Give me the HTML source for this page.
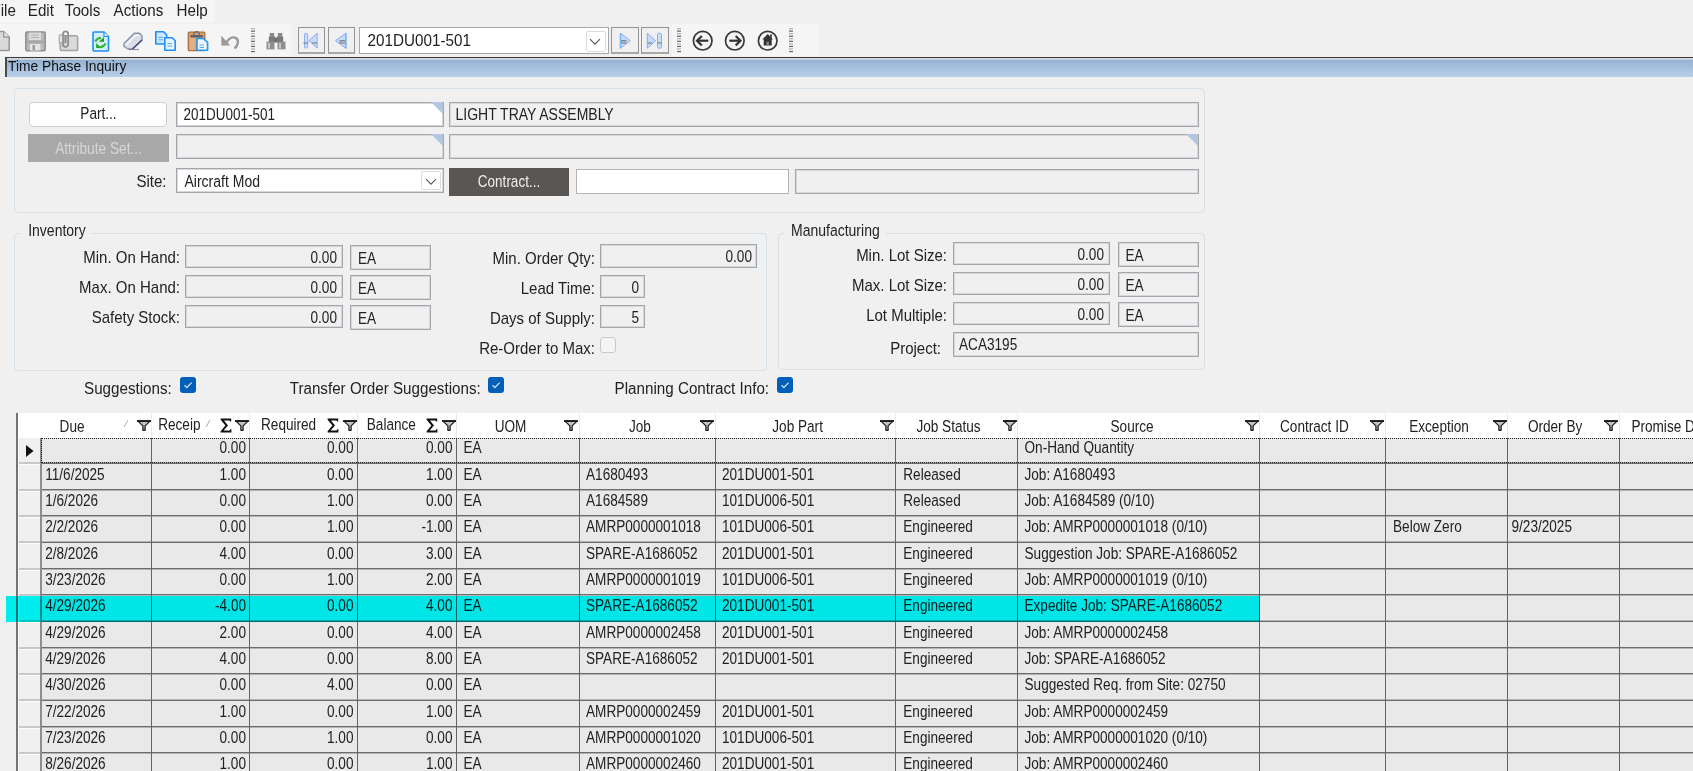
<!DOCTYPE html><html><head><meta charset="utf-8"><title>Time Phase Inquiry</title><style>
html,body{margin:0;padding:0;}
body{width:1693px;height:771px;overflow:hidden;background:#f0f0f0;position:relative;font-family:"Liberation Sans", sans-serif;color:#222;}
div,svg{position:absolute;box-sizing:border-box;}
.t{white-space:pre;line-height:1;}
</style></head><body>
<div style="left:0px;top:0px;width:215px;height:23px;background:#f5f5f5"></div>
<div class="t" style="left:-8.6px;top:3px;font-size:15.2px;transform:scaleY(1.1);transform-origin:0 85%;">File</div>
<div class="t" style="left:27.8px;top:3px;font-size:15.2px;transform:scaleY(1.1);transform-origin:0 85%;">Edit</div>
<div class="t" style="left:64.8px;top:3px;font-size:15.2px;transform:scaleY(1.1);transform-origin:0 85%;">Tools</div>
<div class="t" style="left:113.5px;top:3px;font-size:15.2px;transform:scaleY(1.1);transform-origin:0 85%;">Actions</div>
<div class="t" style="left:176.5px;top:3px;font-size:15.2px;transform:scaleY(1.1);transform-origin:0 85%;">Help</div>
<div style="left:0px;top:24px;width:292px;height:32px;background:#f5f5f5"></div>
<div style="left:672px;top:24px;width:147px;height:32px;background:#f5f5f5"></div>
<svg style="left:-10px;top:30px" width="22" height="22" viewBox="0 0 22 22"><path d="M0.8 1.5 H13.7 L19.2 7 V19.8 Q19.2 20.5 18.5 20.5 H0.8 Z" fill="#d9d9d9" stroke="#9a9a9a" stroke-width="1.6"/><path d="M13.7 1.5 V7 H19.2" fill="#ececec" stroke="#9a9a9a" stroke-width="1.4"/></svg>
<svg style="left:25px;top:31px" width="21" height="21" viewBox="0 0 21 21"><rect x="0.8" y="1" width="19.4" height="18.8" rx="1.2" fill="#b8b8b8" stroke="#8e8e8e" stroke-width="1.5"/><rect x="4" y="1.5" width="12" height="7.5" fill="#dcdcdc"/><line x1="6" y1="4" x2="14" y2="4" stroke="#b0b0b0"/><line x1="6" y1="6.5" x2="14" y2="6.5" stroke="#b0b0b0"/><rect x="1.5" y="9.5" width="18" height="3" fill="#a8a8a8"/><rect x="5" y="13" width="10.5" height="6.5" fill="#e4e4e4"/><rect x="7.5" y="14" width="2.5" height="5" fill="#9a9a9a"/></svg>
<svg style="left:58px;top:30px" width="21" height="22" viewBox="0 0 21 22"><rect x="2.3" y="5.7" width="17.3" height="14.8" rx="1.8" fill="#dadada" stroke="#a2a2a2" stroke-width="1.6"/><rect x="1.3" y="5" width="5" height="8" fill="#e6e6e6" stroke="#a8a8a8" stroke-width="1.2"/><path d="M5 16 V4 Q5 1.3 7.6 1.3 Q10.2 1.3 10.2 4 V14 Q10.2 16.8 7.6 16.8 Q5 16.8 5 14" fill="none" stroke="#8c8c8c" stroke-width="1.7"/><path d="M7.8 5 V13" stroke="#8c8c8c" stroke-width="1.5"/></svg>
<svg style="left:92px;top:31px" width="18" height="21" viewBox="0 0 18 21"><path d="M1 2 Q1 1 2 1 H12 L16.5 5.5 V19 Q16.5 20 15.5 20 H2 Q1 20 1 19 Z" fill="#d4eefc" stroke="#1e8ff5" stroke-width="1.6"/><path d="M12 1 V5.5 H16.5" fill="#eef8ff" stroke="#1e8ff5" stroke-width="1.2"/><path d="M3.2 10.6 Q5.2 7 9 6.8" fill="none" stroke="#35b535" stroke-width="2.1"/><path d="M6.8 10.8 L12 6 V10.8 Z" fill="#18a818"/><path d="M4.2 12 V17 H9.2 Z" fill="#18a818"/><path d="M8 16.4 Q11.8 16 13.6 12.4" fill="none" stroke="#35b535" stroke-width="2.1"/></svg>
<svg style="left:122px;top:32px" width="22" height="19" viewBox="0 0 22 19"><path d="M12.3 1.2 H17.5 L20 4 V8 L10.5 17 H6 L2 14.5 V11.5 Z" fill="#d8dde8" stroke="#8894a8" stroke-width="1.4" stroke-linejoin="round"/><path d="M4 13 L13.5 3.5 H17.5" fill="none" stroke="#ffffff" stroke-width="1.2"/><path d="M10.5 17 L20 8" stroke="#4a4a78" stroke-width="1.6"/><path d="M7 17.5 H17" stroke="#6a6a90" stroke-width="1.2" opacity="0.7"/></svg>
<svg style="left:154px;top:30px" width="23" height="22" viewBox="0 0 23 22"><path d="M1.8 1.8 H9.6 L12.6 4.8 V14 H1.8 Z" fill="#cfe8fb" stroke="#1e8ff5" stroke-width="1.6" stroke-linejoin="round"/><line x1="4.5" y1="7.4" x2="9" y2="7.4" stroke="#62a8e8" stroke-width="1"/><line x1="4.5" y1="9.8" x2="9" y2="9.8" stroke="#62a8e8" stroke-width="1"/><path d="M10.8 7.8 H18.2 L21.2 10.8 V20.3 H10.8 Z" fill="#e6f4fe" stroke="#1e8ff5" stroke-width="1.6" stroke-linejoin="round"/><line x1="13.5" y1="13.6" x2="18" y2="13.6" stroke="#62a8e8" stroke-width="1"/><line x1="13.5" y1="16.2" x2="18" y2="16.2" stroke="#62a8e8" stroke-width="1"/></svg>
<svg style="left:187px;top:30px" width="22" height="22" viewBox="0 0 22 22"><rect x="1.3" y="2.2" width="16.5" height="18.5" rx="1" fill="#d9a070" stroke="#b07038" stroke-width="1.3"/><rect x="2.5" y="7" width="6" height="13" fill="#e8b890" opacity="0.6"/><path d="M4.5 6.2 H14.8" stroke="#5a6270" stroke-width="2.4" stroke-linecap="round"/><path d="M6.8 5.5 Q6.8 1.6 9.6 1.6 Q12.4 1.6 12.4 5.5" fill="none" stroke="#6a707a" stroke-width="1.4"/><path d="M10 8.5 H16.3 L20.6 12.3 V20.3 H10 Z" fill="#eaf6ff" stroke="#2196f3" stroke-width="1.6" stroke-linejoin="round"/><line x1="12.5" y1="15" x2="17" y2="15" stroke="#62a8e8"/><line x1="12.5" y1="17.5" x2="17" y2="17.5" stroke="#62a8e8"/></svg>
<svg style="left:220px;top:33px" width="20" height="17" viewBox="0 0 20 17"><path d="M6 10 Q10 3.5 14.5 4.5 Q18.5 5.5 17.8 10 Q17.2 13.5 14.5 15.5" fill="none" stroke="#9a9a9a" stroke-width="2.4"/><path d="M1.3 2.5 V12.5 H10.2 Z" fill="#9a9a9a"/></svg>
<svg style="left:250.6px;top:28px" width="4" height="25" viewBox="0 0 4 25"><rect x="0" y="0.00" width="4" height="1.2" fill="#b0b0b0"/><rect x="0" y="2.55" width="4" height="1.2" fill="#666666"/><rect x="0" y="5.10" width="4" height="1.2" fill="#b0b0b0"/><rect x="0" y="7.65" width="4" height="1.2" fill="#666666"/><rect x="0" y="10.20" width="4" height="1.2" fill="#b0b0b0"/><rect x="0" y="12.75" width="4" height="1.2" fill="#666666"/><rect x="0" y="15.30" width="4" height="1.2" fill="#b0b0b0"/><rect x="0" y="17.85" width="4" height="1.2" fill="#666666"/><rect x="0" y="20.40" width="4" height="1.2" fill="#b0b0b0"/><rect x="0" y="22.95" width="4" height="1.2" fill="#666666"/></svg>
<svg style="left:677.4px;top:28px" width="4" height="25" viewBox="0 0 4 25"><rect x="0" y="0.00" width="4" height="1.2" fill="#b0b0b0"/><rect x="0" y="2.55" width="4" height="1.2" fill="#666666"/><rect x="0" y="5.10" width="4" height="1.2" fill="#b0b0b0"/><rect x="0" y="7.65" width="4" height="1.2" fill="#666666"/><rect x="0" y="10.20" width="4" height="1.2" fill="#b0b0b0"/><rect x="0" y="12.75" width="4" height="1.2" fill="#666666"/><rect x="0" y="15.30" width="4" height="1.2" fill="#b0b0b0"/><rect x="0" y="17.85" width="4" height="1.2" fill="#666666"/><rect x="0" y="20.40" width="4" height="1.2" fill="#b0b0b0"/><rect x="0" y="22.95" width="4" height="1.2" fill="#666666"/></svg>
<svg style="left:789px;top:28px" width="4" height="25" viewBox="0 0 4 25"><rect x="0" y="0.00" width="4" height="1.2" fill="#b0b0b0"/><rect x="0" y="2.55" width="4" height="1.2" fill="#666666"/><rect x="0" y="5.10" width="4" height="1.2" fill="#b0b0b0"/><rect x="0" y="7.65" width="4" height="1.2" fill="#666666"/><rect x="0" y="10.20" width="4" height="1.2" fill="#b0b0b0"/><rect x="0" y="12.75" width="4" height="1.2" fill="#666666"/><rect x="0" y="15.30" width="4" height="1.2" fill="#b0b0b0"/><rect x="0" y="17.85" width="4" height="1.2" fill="#666666"/><rect x="0" y="20.40" width="4" height="1.2" fill="#b0b0b0"/><rect x="0" y="22.95" width="4" height="1.2" fill="#666666"/></svg>
<svg style="left:266px;top:32px" width="20" height="18" viewBox="0 0 20 18"><rect x="3.7" y="1" width="4.5" height="4" fill="#8a8a8a"/><rect x="11.8" y="1" width="4.5" height="4" fill="#8a8a8a"/><rect x="2.8" y="4.6" width="6.2" height="5.6" fill="#7a7a7a"/><rect x="11" y="4.6" width="6.2" height="5.6" fill="#7a7a7a"/><rect x="8.5" y="5.5" width="3" height="5" fill="#6e6e6e"/><rect x="0.5" y="9.6" width="8" height="7.8" fill="#8f8f8f"/><rect x="11.5" y="9.6" width="8" height="7.8" fill="#8f8f8f"/><rect x="2" y="11" width="2" height="5.5" fill="#c8c8c8"/><rect x="13" y="11" width="2" height="5.5" fill="#c8c8c8"/></svg>
<div style="left:298px;top:27px;width:27px;height:27px;border:1px solid #939393;border-bottom:2px solid #a8a8a8;background:#f0f0f0"></div>
<div style="left:328px;top:27px;width:27px;height:27px;border:1px solid #939393;border-bottom:2px solid #a8a8a8;background:#f0f0f0"></div>
<div style="left:611px;top:27px;width:28px;height:27px;border:1px solid #939393;border-bottom:2px solid #a8a8a8;background:#f0f0f0"></div>
<div style="left:641px;top:27px;width:28px;height:27px;border:1px solid #939393;border-bottom:2px solid #a8a8a8;background:#f0f0f0"></div>
<div style="left:359px;top:27px;width:250px;height:27px;border:1px solid #a8a8ac;background:#fff"></div>
<div class="t" style="left:367.5px;top:33px;font-size:15.25px;transform:scaleY(1.03);transform-origin:0 85%;">201DU001-501</div>
<div style="left:586px;top:31px;width:20px;height:21px;border:1px solid #dcdcdc;border-radius:2px;background:#fff"></div>
<svg style="left:302px;top:32px" width="18" height="18" viewBox="0 0 18 18"><rect x="2.5" y="1.6" width="3.2" height="14.3" rx="0.6" fill="#c2e2fa" stroke="#90a8f8" stroke-width="0.9"/><path d="M6.8 8.7 L15.2 1.2 V16.2 Z" fill="#c6dcf6" stroke="#90a8f8" stroke-width="1" stroke-linejoin="round"/><line x1="1.5" y1="11" x2="5.8" y2="11" stroke="#707070" stroke-width="1"/><line x1="10" y1="11" x2="15" y2="11" stroke="#707070" stroke-width="1"/></svg>
<svg style="left:334px;top:32px" width="14" height="18" viewBox="0 0 14 18"><path d="M1.5 8.7 L11.8 1.2 V16.2 Z" fill="#c6dcf6" stroke="#90a8f8" stroke-width="1" stroke-linejoin="round"/><line x1="11.8" y1="1" x2="11.8" y2="16.5" stroke="#7ab8f0" stroke-width="1.6"/><line x1="5.5" y1="8.8" x2="11" y2="8.8" stroke="#707070" stroke-width="1.2"/><line x1="5" y1="11" x2="11" y2="11" stroke="#707070" stroke-width="1"/></svg>
<svg style="left:619px;top:32px" width="14" height="18" viewBox="0 0 14 18"><path d="M1.5 1.2 L11.2 8.7 L1.5 16.2 Z" fill="#c6dcf6" stroke="#90a8f8" stroke-width="1" stroke-linejoin="round"/><line x1="1.5" y1="1" x2="1.5" y2="16.5" stroke="#7ab8f0" stroke-width="1.6"/><line x1="2" y1="8.8" x2="7.5" y2="8.8" stroke="#707070" stroke-width="1.2"/><line x1="2" y1="11" x2="7.5" y2="11" stroke="#707070" stroke-width="1"/></svg>
<svg style="left:646px;top:32px" width="18" height="18" viewBox="0 0 18 18"><path d="M1.3 1.2 L9.5 8.7 L1.3 16.2 Z" fill="#c6dcf6" stroke="#90a8f8" stroke-width="1" stroke-linejoin="round"/><rect x="11.5" y="1.2" width="4" height="15" rx="1.5" fill="#c2e2fa" stroke="#90a8f8" stroke-width="1"/><line x1="1.5" y1="11" x2="5.8" y2="11" stroke="#707070" stroke-width="1"/><line x1="11.5" y1="11" x2="15.5" y2="11" stroke="#707070" stroke-width="1"/></svg>
<svg style="left:589px;top:38px" width="12" height="8" viewBox="0 0 12 8"><path d="M1 1.2 L6 6.2 L11 1.2" fill="none" stroke="#555" stroke-width="1.1"/></svg>
<svg style="left:692px;top:30px" width="22" height="22" viewBox="0 0 22 22"><circle cx="10.7" cy="10.7" r="9.3" fill="none" stroke="#3a3a3a" stroke-width="1.7"/><path d="M5 10.7 H16.3" stroke="#333" stroke-width="2.2"/><path d="M9.8 6 L5 10.7 L9.8 15.4" fill="none" stroke="#333" stroke-width="2.2"/></svg>
<svg style="left:724px;top:30px" width="22" height="22" viewBox="0 0 22 22"><circle cx="10.8" cy="10.7" r="9.3" fill="none" stroke="#3a3a3a" stroke-width="1.7"/><path d="M5.3 10.7 H16.5" stroke="#333" stroke-width="2.2"/><path d="M11.7 6 L16.5 10.7 L11.7 15.4" fill="none" stroke="#333" stroke-width="2.2"/></svg>
<svg style="left:757px;top:30px" width="22" height="22" viewBox="0 0 22 22"><circle cx="10.7" cy="10.7" r="9.3" fill="none" stroke="#3a3a3a" stroke-width="1.7"/><path d="M10.7 4 L16 9.5 H14.7 V15.5 H6.7 V9.5 H5.4 Z" fill="#333"/><rect x="13.2" y="4.3" width="1.6" height="3.5" fill="#333"/><rect x="9.5" y="11.8" width="2.4" height="3.7" fill="#888"/></svg>
<div style="left:5px;top:57px;width:1688px;height:20px;border-top:1px solid #3a3a3a;border-left:2px solid #4a4a4a;background:linear-gradient(#d3d8dd 0px,#d3d8dd 1.3px,#95b1d3 2.2px,#b9d0ea 19px)"></div>
<div class="t" style="left:8px;top:60px;font-size:13.8px;transform:scaleY(1.1);transform-origin:0 85%;color:#101010">Time Phase Inquiry</div>
<div style="left:14px;top:88px;width:1191px;height:125px;border:1px solid #d5e0e8;border-radius:4px"></div>
<div style="left:29px;top:102px;width:138px;height:25px;border:1px solid #cfcfcf;border-radius:4px;background:#fff"></div>
<div class="t" style="left:-201.5px;width:600px;text-align:center;top:108px;font-size:13.6px;transform:scaleY(1.22);transform-origin:0 85%;">Part...</div>
<div style="left:176px;top:102px;width:268px;height:25px;border:1px solid #a4a6ac;box-shadow:inset 1px 1px 0 #d6d8dc,inset -1px -1px 0 #d6d8dc;background:#fff"></div>
<div style="left:431px;top:102px;width:0;height:0;border-top:12px solid #b3c6e0;border-left:12px solid transparent"></div>
<div class="t" style="left:183.5px;top:108.5px;font-size:13.5px;transform:scaleY(1.22);transform-origin:0 85%;">201DU001-501</div>
<div style="left:449px;top:102px;width:750px;height:25px;border:1px solid #a4a6ac;box-shadow:inset 1px 1px 0 #d6d8dc,inset -1px -1px 0 #d6d8dc;background:#f0f0f0"></div>
<div class="t" style="left:455.5px;top:108px;font-size:14.0px;transform:scaleY(1.22);transform-origin:0 85%;">LIGHT TRAY ASSEMBLY</div>
<div style="left:28px;top:134px;width:141px;height:28px;background:#a8a8a8"></div>
<div class="t" style="left:-201.5px;width:600px;text-align:center;top:142.5px;font-size:13.7px;transform:scaleY(1.22);transform-origin:0 85%;color:#d6d6d6">Attribute Set...</div>
<div style="left:176px;top:134px;width:268px;height:25px;border:1px solid #a4a6ac;box-shadow:inset 1px 1px 0 #d6d8dc,inset -1px -1px 0 #d6d8dc;background:#f0f0f0"></div>
<div style="left:431px;top:134px;width:0;height:0;border-top:12px solid #b3c6e0;border-left:12px solid transparent"></div>
<div style="left:449px;top:134px;width:750px;height:25px;border:1px solid #a4a6ac;box-shadow:inset 1px 1px 0 #d6d8dc,inset -1px -1px 0 #d6d8dc;background:#f0f0f0"></div>
<div style="left:1186px;top:134px;width:0;height:0;border-top:12px solid #b3c6e0;border-left:12px solid transparent"></div>
<div class="t" style="right:1526.5px;top:174px;font-size:15px;transform:scaleY(1.12);transform-origin:0 85%;">Site:</div>
<div style="left:176px;top:168px;width:268px;height:25px;border:1px solid #a4a6ac;box-shadow:inset 1px 1px 0 #d6d8dc,inset -1px -1px 0 #d6d8dc;background:#fff"></div>
<div class="t" style="left:184.5px;top:174.5px;font-size:14px;transform:scaleY(1.22);transform-origin:0 85%;">Aircraft Mod</div>
<div style="left:421px;top:171px;width:20px;height:19px;border:1px solid #dcdcdc;border-radius:2px;background:#fff"></div>
<svg style="left:425px;top:178px" width="12" height="8" viewBox="0 0 12 8"><path d="M1 1.2 L6 6.2 L11 1.2" fill="none" stroke="#555" stroke-width="1.1"/></svg>
<div style="left:449px;top:168px;width:120px;height:28px;background:#595654"></div>
<div class="t" style="left:209px;width:600px;text-align:center;top:176px;font-size:13.5px;transform:scaleY(1.22);transform-origin:0 85%;color:#f0f0f0">Contract...</div>
<div style="left:576px;top:169px;width:213px;height:25px;border:1px solid #b4b4b4;background:#fff"></div>
<div style="left:795px;top:169px;width:404px;height:25px;border:1px solid #a4a6ac;box-shadow:inset 1px 1px 0 #d6d8dc,inset -1px -1px 0 #d6d8dc;background:#f0f0f0"></div>
<div style="left:14px;top:233px;width:753px;height:138px;border:1px solid #d5e0e8;border-radius:4px"></div>
<div style="left:21px;top:226px;width:70px;height:14px;background:#f0f0f0"></div>
<div class="t" style="left:28.2px;top:224px;font-size:14.0px;transform:scaleY(1.22);transform-origin:0 85%;">Inventory</div>
<div class="t" style="right:1513px;top:250px;font-size:15px;transform:scaleY(1.12);transform-origin:0 85%;">Min. On Hand:</div>
<div style="left:185px;top:245px;width:158px;height:23px;border:1px solid #a4a6ac;box-shadow:inset 1px 1px 0 #d6d8dc,inset -1px -1px 0 #d6d8dc;background:#f0f0f0"></div>
<div class="t" style="right:1356px;top:252px;font-size:13.6px;transform:scaleY(1.22);transform-origin:0 85%;">0.00</div>
<div style="left:350px;top:245px;width:81px;height:25px;border:1px solid #a4a6ac;box-shadow:inset 1px 1px 0 #d6d8dc,inset -1px -1px 0 #d6d8dc;background:#f0f0f0"></div>
<div class="t" style="left:358px;top:252.5px;font-size:13.6px;transform:scaleY(1.22);transform-origin:0 85%;">EA</div>
<div class="t" style="right:1513px;top:280px;font-size:15px;transform:scaleY(1.12);transform-origin:0 85%;">Max. On Hand:</div>
<div style="left:185px;top:275px;width:158px;height:23px;border:1px solid #a4a6ac;box-shadow:inset 1px 1px 0 #d6d8dc,inset -1px -1px 0 #d6d8dc;background:#f0f0f0"></div>
<div class="t" style="right:1356px;top:282px;font-size:13.6px;transform:scaleY(1.22);transform-origin:0 85%;">0.00</div>
<div style="left:350px;top:275px;width:81px;height:25px;border:1px solid #a4a6ac;box-shadow:inset 1px 1px 0 #d6d8dc,inset -1px -1px 0 #d6d8dc;background:#f0f0f0"></div>
<div class="t" style="left:358px;top:282.5px;font-size:13.6px;transform:scaleY(1.22);transform-origin:0 85%;">EA</div>
<div class="t" style="right:1513px;top:310px;font-size:15px;transform:scaleY(1.12);transform-origin:0 85%;">Safety Stock:</div>
<div style="left:185px;top:305px;width:158px;height:23px;border:1px solid #a4a6ac;box-shadow:inset 1px 1px 0 #d6d8dc,inset -1px -1px 0 #d6d8dc;background:#f0f0f0"></div>
<div class="t" style="right:1356px;top:312px;font-size:13.6px;transform:scaleY(1.22);transform-origin:0 85%;">0.00</div>
<div style="left:350px;top:305px;width:81px;height:25px;border:1px solid #a4a6ac;box-shadow:inset 1px 1px 0 #d6d8dc,inset -1px -1px 0 #d6d8dc;background:#f0f0f0"></div>
<div class="t" style="left:358px;top:312.5px;font-size:13.6px;transform:scaleY(1.22);transform-origin:0 85%;">EA</div>
<div class="t" style="right:1098px;top:251px;font-size:15px;transform:scaleY(1.12);transform-origin:0 85%;">Min. Order Qty:</div>
<div class="t" style="right:1098px;top:281px;font-size:15px;transform:scaleY(1.12);transform-origin:0 85%;">Lead Time:</div>
<div class="t" style="right:1098px;top:311px;font-size:15px;transform:scaleY(1.12);transform-origin:0 85%;">Days of Supply:</div>
<div class="t" style="right:1098px;top:341px;font-size:15px;transform:scaleY(1.12);transform-origin:0 85%;">Re-Order to Max:</div>
<div style="left:600px;top:244px;width:157px;height:24px;border:1px solid #a4a6ac;box-shadow:inset 1px 1px 0 #d6d8dc,inset -1px -1px 0 #d6d8dc;background:#f0f0f0"></div>
<div class="t" style="right:941px;top:251px;font-size:13.6px;transform:scaleY(1.22);transform-origin:0 85%;">0.00</div>
<div style="left:600px;top:275px;width:45px;height:23px;border:1px solid #a4a6ac;box-shadow:inset 1px 1px 0 #d6d8dc,inset -1px -1px 0 #d6d8dc;background:#f0f0f0"></div>
<div class="t" style="right:1054px;top:281.5px;font-size:13.6px;transform:scaleY(1.22);transform-origin:0 85%;">0</div>
<div style="left:600px;top:305px;width:45px;height:23px;border:1px solid #a4a6ac;box-shadow:inset 1px 1px 0 #d6d8dc,inset -1px -1px 0 #d6d8dc;background:#f0f0f0"></div>
<div class="t" style="right:1054px;top:311.5px;font-size:13.6px;transform:scaleY(1.22);transform-origin:0 85%;">5</div>
<div style="left:600px;top:337px;width:16px;height:16px;border:1px solid #c8c8c8;border-radius:3px;background:#f4f4f4"></div>
<div style="left:778px;top:233px;width:427px;height:137px;border:1px solid #d5e0e8;border-radius:4px"></div>
<div style="left:784px;top:226px;width:102px;height:14px;background:#f0f0f0"></div>
<div class="t" style="left:791px;top:224px;font-size:14.0px;transform:scaleY(1.22);transform-origin:0 85%;">Manufacturing</div>
<div class="t" style="right:746px;top:248px;font-size:15px;transform:scaleY(1.12);transform-origin:0 85%;">Min. Lot Size:</div>
<div style="left:953px;top:242px;width:157px;height:23px;border:1px solid #a4a6ac;box-shadow:inset 1px 1px 0 #d6d8dc,inset -1px -1px 0 #d6d8dc;background:#f0f0f0"></div>
<div class="t" style="right:589px;top:249px;font-size:13.6px;transform:scaleY(1.22);transform-origin:0 85%;">0.00</div>
<div style="left:1118px;top:242px;width:81px;height:25px;border:1px solid #a4a6ac;box-shadow:inset 1px 1px 0 #d6d8dc,inset -1px -1px 0 #d6d8dc;background:#f0f0f0"></div>
<div class="t" style="left:1125.5px;top:250px;font-size:13.6px;transform:scaleY(1.22);transform-origin:0 85%;">EA</div>
<div class="t" style="right:746px;top:278px;font-size:15px;transform:scaleY(1.12);transform-origin:0 85%;">Max. Lot Size:</div>
<div style="left:953px;top:272px;width:157px;height:23px;border:1px solid #a4a6ac;box-shadow:inset 1px 1px 0 #d6d8dc,inset -1px -1px 0 #d6d8dc;background:#f0f0f0"></div>
<div class="t" style="right:589px;top:279px;font-size:13.6px;transform:scaleY(1.22);transform-origin:0 85%;">0.00</div>
<div style="left:1118px;top:272px;width:81px;height:25px;border:1px solid #a4a6ac;box-shadow:inset 1px 1px 0 #d6d8dc,inset -1px -1px 0 #d6d8dc;background:#f0f0f0"></div>
<div class="t" style="left:1125.5px;top:280px;font-size:13.6px;transform:scaleY(1.22);transform-origin:0 85%;">EA</div>
<div class="t" style="right:746px;top:308px;font-size:15px;transform:scaleY(1.12);transform-origin:0 85%;">Lot Multiple:</div>
<div style="left:953px;top:302px;width:157px;height:23px;border:1px solid #a4a6ac;box-shadow:inset 1px 1px 0 #d6d8dc,inset -1px -1px 0 #d6d8dc;background:#f0f0f0"></div>
<div class="t" style="right:589px;top:309px;font-size:13.6px;transform:scaleY(1.22);transform-origin:0 85%;">0.00</div>
<div style="left:1118px;top:302px;width:81px;height:25px;border:1px solid #a4a6ac;box-shadow:inset 1px 1px 0 #d6d8dc,inset -1px -1px 0 #d6d8dc;background:#f0f0f0"></div>
<div class="t" style="left:1125.5px;top:310px;font-size:13.6px;transform:scaleY(1.22);transform-origin:0 85%;">EA</div>
<div class="t" style="right:752px;top:340.5px;font-size:15px;transform:scaleY(1.12);transform-origin:0 85%;">Project:</div>
<div style="left:953px;top:332px;width:246px;height:25px;border:1px solid #a4a6ac;box-shadow:inset 1px 1px 0 #d6d8dc,inset -1px -1px 0 #d6d8dc;background:#f0f0f0"></div>
<div class="t" style="left:959px;top:338.5px;font-size:13.6px;transform:scaleY(1.22);transform-origin:0 85%;">ACA3195</div>
<div class="t" style="left:84px;top:381px;font-size:15.2px;transform:scaleY(1.12);transform-origin:0 85%;">Suggestions:</div>
<div style="left:180px;top:377px;width:16px;height:16px;border-radius:3px;background:#005fb8"></div>
<svg style="left:180px;top:377px" width="16" height="16" viewBox="0 0 16 16"><path d="M4.5 8.2 L6.9 10.5 L11.6 5.6" fill="none" stroke="#cfe0f4" stroke-width="1.3"/></svg>
<div class="t" style="left:289.7px;top:381px;font-size:15.2px;transform:scaleY(1.12);transform-origin:0 85%;">Transfer Order Suggestions:</div>
<div style="left:488px;top:377px;width:16px;height:16px;border-radius:3px;background:#005fb8"></div>
<svg style="left:488px;top:377px" width="16" height="16" viewBox="0 0 16 16"><path d="M4.5 8.2 L6.9 10.5 L11.6 5.6" fill="none" stroke="#cfe0f4" stroke-width="1.3"/></svg>
<div class="t" style="left:614.6px;top:381px;font-size:15.2px;transform:scaleY(1.12);transform-origin:0 85%;">Planning Contract Info:</div>
<div style="left:776.5px;top:377px;width:16px;height:16px;border-radius:3px;background:#005fb8"></div>
<svg style="left:776.5px;top:377px" width="16" height="16" viewBox="0 0 16 16"><path d="M4.5 8.2 L6.9 10.5 L11.6 5.6" fill="none" stroke="#cfe0f4" stroke-width="1.3"/></svg>
<div style="left:18px;top:413px;width:1675px;height:25px;background:#fff"></div>
<div style="left:151px;top:413px;width:1px;height:25px;background:#e8e8e8"></div>
<div style="left:249px;top:413px;width:1px;height:25px;background:#e8e8e8"></div>
<div style="left:357px;top:413px;width:1px;height:25px;background:#e8e8e8"></div>
<div style="left:456px;top:413px;width:1px;height:25px;background:#e8e8e8"></div>
<div style="left:579px;top:413px;width:1px;height:25px;background:#e8e8e8"></div>
<div style="left:715px;top:413px;width:1px;height:25px;background:#e8e8e8"></div>
<div style="left:895px;top:413px;width:1px;height:25px;background:#e8e8e8"></div>
<div style="left:1017px;top:413px;width:1px;height:25px;background:#e8e8e8"></div>
<div style="left:1259px;top:413px;width:1px;height:25px;background:#e8e8e8"></div>
<div style="left:1385px;top:413px;width:1px;height:25px;background:#e8e8e8"></div>
<div style="left:1507px;top:413px;width:1px;height:25px;background:#e8e8e8"></div>
<div style="left:1619px;top:413px;width:1px;height:25px;background:#e8e8e8"></div>
<div style="left:17px;top:438px;width:1676px;height:333px;background:#e9e9e9"></div>
<div style="left:17px;top:438px;width:24px;height:333px;background:#f0f0f0"></div>
<div style="left:16px;top:413px;width:2px;height:358px;background:#747474"></div>
<div style="left:18px;top:438px;width:1px;height:333px;background:#fcfcfc"></div>
<div style="left:41px;top:463px;width:1652px;height:1px;background:#6c6c6c"></div>
<div style="left:41px;top:462px;width:1652px;height:1px;background:#b4b4b4"></div>
<div style="left:19px;top:462px;width:21px;height:2px;background:#c8c8c8"></div>
<div style="left:19px;top:464px;width:21px;height:1px;background:#fcfcfc"></div>
<div style="left:41px;top:489px;width:1652px;height:1px;background:#6c6c6c"></div>
<div style="left:41px;top:490px;width:1652px;height:1px;background:#b4b4b4"></div>
<div style="left:19px;top:489px;width:21px;height:2px;background:#c8c8c8"></div>
<div style="left:19px;top:491px;width:21px;height:1px;background:#fcfcfc"></div>
<div style="left:41px;top:515px;width:1652px;height:1px;background:#6c6c6c"></div>
<div style="left:41px;top:516px;width:1652px;height:1px;background:#b4b4b4"></div>
<div style="left:19px;top:515px;width:21px;height:2px;background:#c8c8c8"></div>
<div style="left:19px;top:517px;width:21px;height:1px;background:#fcfcfc"></div>
<div style="left:41px;top:542px;width:1652px;height:1px;background:#6c6c6c"></div>
<div style="left:41px;top:541px;width:1652px;height:1px;background:#b4b4b4"></div>
<div style="left:19px;top:541px;width:21px;height:2px;background:#c8c8c8"></div>
<div style="left:19px;top:543px;width:21px;height:1px;background:#fcfcfc"></div>
<div style="left:41px;top:568px;width:1652px;height:1px;background:#6c6c6c"></div>
<div style="left:41px;top:569px;width:1652px;height:1px;background:#b4b4b4"></div>
<div style="left:19px;top:568px;width:21px;height:2px;background:#c8c8c8"></div>
<div style="left:19px;top:570px;width:21px;height:1px;background:#fcfcfc"></div>
<div style="left:41px;top:594px;width:1652px;height:1px;background:#6c6c6c"></div>
<div style="left:41px;top:595px;width:1652px;height:1px;background:#b4b4b4"></div>
<div style="left:19px;top:594px;width:21px;height:2px;background:#c8c8c8"></div>
<div style="left:19px;top:596px;width:21px;height:1px;background:#fcfcfc"></div>
<div style="left:41px;top:621px;width:1652px;height:1px;background:#6c6c6c"></div>
<div style="left:41px;top:620px;width:1652px;height:1px;background:#b4b4b4"></div>
<div style="left:19px;top:620px;width:21px;height:2px;background:#c8c8c8"></div>
<div style="left:19px;top:622px;width:21px;height:1px;background:#fcfcfc"></div>
<div style="left:41px;top:647px;width:1652px;height:1px;background:#6c6c6c"></div>
<div style="left:41px;top:648px;width:1652px;height:1px;background:#b4b4b4"></div>
<div style="left:19px;top:647px;width:21px;height:2px;background:#c8c8c8"></div>
<div style="left:19px;top:649px;width:21px;height:1px;background:#fcfcfc"></div>
<div style="left:41px;top:673px;width:1652px;height:1px;background:#6c6c6c"></div>
<div style="left:41px;top:674px;width:1652px;height:1px;background:#b4b4b4"></div>
<div style="left:19px;top:673px;width:21px;height:2px;background:#c8c8c8"></div>
<div style="left:19px;top:675px;width:21px;height:1px;background:#fcfcfc"></div>
<div style="left:41px;top:700px;width:1652px;height:1px;background:#6c6c6c"></div>
<div style="left:41px;top:699px;width:1652px;height:1px;background:#b4b4b4"></div>
<div style="left:19px;top:699px;width:21px;height:2px;background:#c8c8c8"></div>
<div style="left:19px;top:701px;width:21px;height:1px;background:#fcfcfc"></div>
<div style="left:41px;top:726px;width:1652px;height:1px;background:#6c6c6c"></div>
<div style="left:41px;top:727px;width:1652px;height:1px;background:#b4b4b4"></div>
<div style="left:19px;top:726px;width:21px;height:2px;background:#c8c8c8"></div>
<div style="left:19px;top:728px;width:21px;height:1px;background:#fcfcfc"></div>
<div style="left:41px;top:752px;width:1652px;height:1px;background:#6c6c6c"></div>
<div style="left:41px;top:753px;width:1652px;height:1px;background:#b4b4b4"></div>
<div style="left:19px;top:752px;width:21px;height:2px;background:#c8c8c8"></div>
<div style="left:19px;top:754px;width:21px;height:1px;background:#fcfcfc"></div>
<div style="left:40px;top:438px;width:2px;height:333px;background:#8e8e8e"></div>
<div style="left:151px;top:438px;width:1px;height:333px;background:#656565"></div>
<div style="left:249px;top:438px;width:1px;height:333px;background:#656565"></div>
<div style="left:357px;top:438px;width:1px;height:333px;background:#656565"></div>
<div style="left:456px;top:438px;width:1px;height:333px;background:#656565"></div>
<div style="left:579px;top:438px;width:1px;height:333px;background:#656565"></div>
<div style="left:715px;top:438px;width:1px;height:333px;background:#656565"></div>
<div style="left:895px;top:438px;width:1px;height:333px;background:#656565"></div>
<div style="left:1017px;top:438px;width:1px;height:333px;background:#656565"></div>
<div style="left:1259px;top:438px;width:1px;height:333px;background:#656565"></div>
<div style="left:1385px;top:438px;width:1px;height:333px;background:#656565"></div>
<div style="left:1507px;top:438px;width:1px;height:333px;background:#656565"></div>
<div style="left:1619px;top:438px;width:1px;height:333px;background:#656565"></div>
<div class="t" style="right:1447.0px;top:442px;font-size:13.6px;transform:scaleY(1.22);transform-origin:0 85%;">0.00</div>
<div class="t" style="right:1339.5px;top:442px;font-size:13.6px;transform:scaleY(1.22);transform-origin:0 85%;">0.00</div>
<div class="t" style="right:1240.5px;top:442px;font-size:13.6px;transform:scaleY(1.22);transform-origin:0 85%;">0.00</div>
<div class="t" style="left:463.5px;top:442px;font-size:13.6px;transform:scaleY(1.22);transform-origin:0 85%;">EA</div>
<div class="t" style="left:1024.5px;top:442px;font-size:13.6px;transform:scaleY(1.22);transform-origin:0 85%;">On-Hand Quantity</div>
<div class="t" style="left:45.2px;top:469px;font-size:13.6px;transform:scaleY(1.22);transform-origin:0 85%;">11/6/2025</div>
<div class="t" style="right:1447.0px;top:469px;font-size:13.6px;transform:scaleY(1.22);transform-origin:0 85%;">1.00</div>
<div class="t" style="right:1339.5px;top:469px;font-size:13.6px;transform:scaleY(1.22);transform-origin:0 85%;">0.00</div>
<div class="t" style="right:1240.5px;top:469px;font-size:13.6px;transform:scaleY(1.22);transform-origin:0 85%;">1.00</div>
<div class="t" style="left:463.5px;top:469px;font-size:13.6px;transform:scaleY(1.22);transform-origin:0 85%;">EA</div>
<div class="t" style="left:586.0px;top:469px;font-size:13.6px;transform:scaleY(1.22);transform-origin:0 85%;">A1680493</div>
<div class="t" style="left:722.0px;top:469px;font-size:13.6px;transform:scaleY(1.22);transform-origin:0 85%;">201DU001-501</div>
<div class="t" style="left:903.3px;top:469px;font-size:13.6px;transform:scaleY(1.22);transform-origin:0 85%;">Released</div>
<div class="t" style="left:1024.5px;top:469px;font-size:13.6px;transform:scaleY(1.22);transform-origin:0 85%;">Job: A1680493</div>
<div class="t" style="left:45.2px;top:495px;font-size:13.6px;transform:scaleY(1.22);transform-origin:0 85%;">1/6/2026</div>
<div class="t" style="right:1447.0px;top:495px;font-size:13.6px;transform:scaleY(1.22);transform-origin:0 85%;">0.00</div>
<div class="t" style="right:1339.5px;top:495px;font-size:13.6px;transform:scaleY(1.22);transform-origin:0 85%;">1.00</div>
<div class="t" style="right:1240.5px;top:495px;font-size:13.6px;transform:scaleY(1.22);transform-origin:0 85%;">0.00</div>
<div class="t" style="left:463.5px;top:495px;font-size:13.6px;transform:scaleY(1.22);transform-origin:0 85%;">EA</div>
<div class="t" style="left:586.0px;top:495px;font-size:13.6px;transform:scaleY(1.22);transform-origin:0 85%;">A1684589</div>
<div class="t" style="left:722.0px;top:495px;font-size:13.6px;transform:scaleY(1.22);transform-origin:0 85%;">101DU006-501</div>
<div class="t" style="left:903.3px;top:495px;font-size:13.6px;transform:scaleY(1.22);transform-origin:0 85%;">Released</div>
<div class="t" style="left:1024.5px;top:495px;font-size:13.6px;transform:scaleY(1.22);transform-origin:0 85%;">Job: A1684589 (0/10)</div>
<div class="t" style="left:45.2px;top:521px;font-size:13.6px;transform:scaleY(1.22);transform-origin:0 85%;">2/2/2026</div>
<div class="t" style="right:1447.0px;top:521px;font-size:13.6px;transform:scaleY(1.22);transform-origin:0 85%;">0.00</div>
<div class="t" style="right:1339.5px;top:521px;font-size:13.6px;transform:scaleY(1.22);transform-origin:0 85%;">1.00</div>
<div class="t" style="right:1240.5px;top:521px;font-size:13.6px;transform:scaleY(1.22);transform-origin:0 85%;">-1.00</div>
<div class="t" style="left:463.5px;top:521px;font-size:13.6px;transform:scaleY(1.22);transform-origin:0 85%;">EA</div>
<div class="t" style="left:586.0px;top:521px;font-size:13.6px;transform:scaleY(1.22);transform-origin:0 85%;">AMRP0000001018</div>
<div class="t" style="left:722.0px;top:521px;font-size:13.6px;transform:scaleY(1.22);transform-origin:0 85%;">101DU006-501</div>
<div class="t" style="left:903.3px;top:521px;font-size:13.6px;transform:scaleY(1.22);transform-origin:0 85%;">Engineered</div>
<div class="t" style="left:1024.5px;top:521px;font-size:13.6px;transform:scaleY(1.22);transform-origin:0 85%;">Job: AMRP0000001018 (0/10)</div>
<div class="t" style="left:1393.0px;top:521px;font-size:13.6px;transform:scaleY(1.22);transform-origin:0 85%;">Below Zero</div>
<div class="t" style="left:1511.5px;top:521px;font-size:13.6px;transform:scaleY(1.22);transform-origin:0 85%;">9/23/2025</div>
<div class="t" style="left:45.2px;top:548px;font-size:13.6px;transform:scaleY(1.22);transform-origin:0 85%;">2/8/2026</div>
<div class="t" style="right:1447.0px;top:548px;font-size:13.6px;transform:scaleY(1.22);transform-origin:0 85%;">4.00</div>
<div class="t" style="right:1339.5px;top:548px;font-size:13.6px;transform:scaleY(1.22);transform-origin:0 85%;">0.00</div>
<div class="t" style="right:1240.5px;top:548px;font-size:13.6px;transform:scaleY(1.22);transform-origin:0 85%;">3.00</div>
<div class="t" style="left:463.5px;top:548px;font-size:13.6px;transform:scaleY(1.22);transform-origin:0 85%;">EA</div>
<div class="t" style="left:586.0px;top:548px;font-size:13.6px;transform:scaleY(1.22);transform-origin:0 85%;">SPARE-A1686052</div>
<div class="t" style="left:722.0px;top:548px;font-size:13.6px;transform:scaleY(1.22);transform-origin:0 85%;">201DU001-501</div>
<div class="t" style="left:903.3px;top:548px;font-size:13.6px;transform:scaleY(1.22);transform-origin:0 85%;">Engineered</div>
<div class="t" style="left:1024.5px;top:548px;font-size:13.6px;transform:scaleY(1.22);transform-origin:0 85%;">Suggestion Job: SPARE-A1686052</div>
<div class="t" style="left:45.2px;top:574px;font-size:13.6px;transform:scaleY(1.22);transform-origin:0 85%;">3/23/2026</div>
<div class="t" style="right:1447.0px;top:574px;font-size:13.6px;transform:scaleY(1.22);transform-origin:0 85%;">0.00</div>
<div class="t" style="right:1339.5px;top:574px;font-size:13.6px;transform:scaleY(1.22);transform-origin:0 85%;">1.00</div>
<div class="t" style="right:1240.5px;top:574px;font-size:13.6px;transform:scaleY(1.22);transform-origin:0 85%;">2.00</div>
<div class="t" style="left:463.5px;top:574px;font-size:13.6px;transform:scaleY(1.22);transform-origin:0 85%;">EA</div>
<div class="t" style="left:586.0px;top:574px;font-size:13.6px;transform:scaleY(1.22);transform-origin:0 85%;">AMRP0000001019</div>
<div class="t" style="left:722.0px;top:574px;font-size:13.6px;transform:scaleY(1.22);transform-origin:0 85%;">101DU006-501</div>
<div class="t" style="left:903.3px;top:574px;font-size:13.6px;transform:scaleY(1.22);transform-origin:0 85%;">Engineered</div>
<div class="t" style="left:1024.5px;top:574px;font-size:13.6px;transform:scaleY(1.22);transform-origin:0 85%;">Job: AMRP0000001019 (0/10)</div>
<div class="t" style="left:45.2px;top:600px;font-size:13.6px;transform:scaleY(1.22);transform-origin:0 85%;">4/29/2026</div>
<div class="t" style="right:1447.0px;top:600px;font-size:13.6px;transform:scaleY(1.22);transform-origin:0 85%;">-4.00</div>
<div class="t" style="right:1339.5px;top:600px;font-size:13.6px;transform:scaleY(1.22);transform-origin:0 85%;">0.00</div>
<div class="t" style="right:1240.5px;top:600px;font-size:13.6px;transform:scaleY(1.22);transform-origin:0 85%;">4.00</div>
<div class="t" style="left:463.5px;top:600px;font-size:13.6px;transform:scaleY(1.22);transform-origin:0 85%;">EA</div>
<div class="t" style="left:586.0px;top:600px;font-size:13.6px;transform:scaleY(1.22);transform-origin:0 85%;">SPARE-A1686052</div>
<div class="t" style="left:722.0px;top:600px;font-size:13.6px;transform:scaleY(1.22);transform-origin:0 85%;">201DU001-501</div>
<div class="t" style="left:903.3px;top:600px;font-size:13.6px;transform:scaleY(1.22);transform-origin:0 85%;">Engineered</div>
<div class="t" style="left:1024.5px;top:600px;font-size:13.6px;transform:scaleY(1.22);transform-origin:0 85%;">Expedite Job: SPARE-A1686052</div>
<div class="t" style="left:45.2px;top:627px;font-size:13.6px;transform:scaleY(1.22);transform-origin:0 85%;">4/29/2026</div>
<div class="t" style="right:1447.0px;top:627px;font-size:13.6px;transform:scaleY(1.22);transform-origin:0 85%;">2.00</div>
<div class="t" style="right:1339.5px;top:627px;font-size:13.6px;transform:scaleY(1.22);transform-origin:0 85%;">0.00</div>
<div class="t" style="right:1240.5px;top:627px;font-size:13.6px;transform:scaleY(1.22);transform-origin:0 85%;">4.00</div>
<div class="t" style="left:463.5px;top:627px;font-size:13.6px;transform:scaleY(1.22);transform-origin:0 85%;">EA</div>
<div class="t" style="left:586.0px;top:627px;font-size:13.6px;transform:scaleY(1.22);transform-origin:0 85%;">AMRP0000002458</div>
<div class="t" style="left:722.0px;top:627px;font-size:13.6px;transform:scaleY(1.22);transform-origin:0 85%;">201DU001-501</div>
<div class="t" style="left:903.3px;top:627px;font-size:13.6px;transform:scaleY(1.22);transform-origin:0 85%;">Engineered</div>
<div class="t" style="left:1024.5px;top:627px;font-size:13.6px;transform:scaleY(1.22);transform-origin:0 85%;">Job: AMRP0000002458</div>
<div class="t" style="left:45.2px;top:653px;font-size:13.6px;transform:scaleY(1.22);transform-origin:0 85%;">4/29/2026</div>
<div class="t" style="right:1447.0px;top:653px;font-size:13.6px;transform:scaleY(1.22);transform-origin:0 85%;">4.00</div>
<div class="t" style="right:1339.5px;top:653px;font-size:13.6px;transform:scaleY(1.22);transform-origin:0 85%;">0.00</div>
<div class="t" style="right:1240.5px;top:653px;font-size:13.6px;transform:scaleY(1.22);transform-origin:0 85%;">8.00</div>
<div class="t" style="left:463.5px;top:653px;font-size:13.6px;transform:scaleY(1.22);transform-origin:0 85%;">EA</div>
<div class="t" style="left:586.0px;top:653px;font-size:13.6px;transform:scaleY(1.22);transform-origin:0 85%;">SPARE-A1686052</div>
<div class="t" style="left:722.0px;top:653px;font-size:13.6px;transform:scaleY(1.22);transform-origin:0 85%;">201DU001-501</div>
<div class="t" style="left:903.3px;top:653px;font-size:13.6px;transform:scaleY(1.22);transform-origin:0 85%;">Engineered</div>
<div class="t" style="left:1024.5px;top:653px;font-size:13.6px;transform:scaleY(1.22);transform-origin:0 85%;">Job: SPARE-A1686052</div>
<div class="t" style="left:45.2px;top:679px;font-size:13.6px;transform:scaleY(1.22);transform-origin:0 85%;">4/30/2026</div>
<div class="t" style="right:1447.0px;top:679px;font-size:13.6px;transform:scaleY(1.22);transform-origin:0 85%;">0.00</div>
<div class="t" style="right:1339.5px;top:679px;font-size:13.6px;transform:scaleY(1.22);transform-origin:0 85%;">4.00</div>
<div class="t" style="right:1240.5px;top:679px;font-size:13.6px;transform:scaleY(1.22);transform-origin:0 85%;">0.00</div>
<div class="t" style="left:463.5px;top:679px;font-size:13.6px;transform:scaleY(1.22);transform-origin:0 85%;">EA</div>
<div class="t" style="left:1024.5px;top:679px;font-size:13.6px;transform:scaleY(1.22);transform-origin:0 85%;">Suggested Req. from Site: 02750</div>
<div class="t" style="left:45.2px;top:706px;font-size:13.6px;transform:scaleY(1.22);transform-origin:0 85%;">7/22/2026</div>
<div class="t" style="right:1447.0px;top:706px;font-size:13.6px;transform:scaleY(1.22);transform-origin:0 85%;">1.00</div>
<div class="t" style="right:1339.5px;top:706px;font-size:13.6px;transform:scaleY(1.22);transform-origin:0 85%;">0.00</div>
<div class="t" style="right:1240.5px;top:706px;font-size:13.6px;transform:scaleY(1.22);transform-origin:0 85%;">1.00</div>
<div class="t" style="left:463.5px;top:706px;font-size:13.6px;transform:scaleY(1.22);transform-origin:0 85%;">EA</div>
<div class="t" style="left:586.0px;top:706px;font-size:13.6px;transform:scaleY(1.22);transform-origin:0 85%;">AMRP0000002459</div>
<div class="t" style="left:722.0px;top:706px;font-size:13.6px;transform:scaleY(1.22);transform-origin:0 85%;">201DU001-501</div>
<div class="t" style="left:903.3px;top:706px;font-size:13.6px;transform:scaleY(1.22);transform-origin:0 85%;">Engineered</div>
<div class="t" style="left:1024.5px;top:706px;font-size:13.6px;transform:scaleY(1.22);transform-origin:0 85%;">Job: AMRP0000002459</div>
<div class="t" style="left:45.2px;top:732px;font-size:13.6px;transform:scaleY(1.22);transform-origin:0 85%;">7/23/2026</div>
<div class="t" style="right:1447.0px;top:732px;font-size:13.6px;transform:scaleY(1.22);transform-origin:0 85%;">0.00</div>
<div class="t" style="right:1339.5px;top:732px;font-size:13.6px;transform:scaleY(1.22);transform-origin:0 85%;">1.00</div>
<div class="t" style="right:1240.5px;top:732px;font-size:13.6px;transform:scaleY(1.22);transform-origin:0 85%;">0.00</div>
<div class="t" style="left:463.5px;top:732px;font-size:13.6px;transform:scaleY(1.22);transform-origin:0 85%;">EA</div>
<div class="t" style="left:586.0px;top:732px;font-size:13.6px;transform:scaleY(1.22);transform-origin:0 85%;">AMRP0000001020</div>
<div class="t" style="left:722.0px;top:732px;font-size:13.6px;transform:scaleY(1.22);transform-origin:0 85%;">101DU006-501</div>
<div class="t" style="left:903.3px;top:732px;font-size:13.6px;transform:scaleY(1.22);transform-origin:0 85%;">Engineered</div>
<div class="t" style="left:1024.5px;top:732px;font-size:13.6px;transform:scaleY(1.22);transform-origin:0 85%;">Job: AMRP0000001020 (0/10)</div>
<div class="t" style="left:45.2px;top:758px;font-size:13.6px;transform:scaleY(1.22);transform-origin:0 85%;">8/26/2026</div>
<div class="t" style="right:1447.0px;top:758px;font-size:13.6px;transform:scaleY(1.22);transform-origin:0 85%;">1.00</div>
<div class="t" style="right:1339.5px;top:758px;font-size:13.6px;transform:scaleY(1.22);transform-origin:0 85%;">0.00</div>
<div class="t" style="right:1240.5px;top:758px;font-size:13.6px;transform:scaleY(1.22);transform-origin:0 85%;">1.00</div>
<div class="t" style="left:463.5px;top:758px;font-size:13.6px;transform:scaleY(1.22);transform-origin:0 85%;">EA</div>
<div class="t" style="left:586.0px;top:758px;font-size:13.6px;transform:scaleY(1.22);transform-origin:0 85%;">AMRP0000002460</div>
<div class="t" style="left:722.0px;top:758px;font-size:13.6px;transform:scaleY(1.22);transform-origin:0 85%;">201DU001-501</div>
<div class="t" style="left:903.3px;top:758px;font-size:13.6px;transform:scaleY(1.22);transform-origin:0 85%;">Engineered</div>
<div class="t" style="left:1024.5px;top:758px;font-size:13.6px;transform:scaleY(1.22);transform-origin:0 85%;">Job: AMRP0000002460</div>
<div class="t" style="left:59.6px;top:420.5px;font-size:13.6px;transform:scaleY(1.22);transform-origin:0 85%;">Due</div>
<div class="t" style="left:158.2px;top:419px;font-size:13.6px;transform:scaleY(1.22);transform-origin:0 85%;">Receip</div>
<div class="t" style="left:261px;top:419px;font-size:13.6px;transform:scaleY(1.22);transform-origin:0 85%;">Required</div>
<div class="t" style="left:366.8px;top:419px;font-size:13.6px;transform:scaleY(1.22);transform-origin:0 85%;">Balance</div>
<div class="t" style="left:494.7px;top:420.5px;font-size:13.6px;transform:scaleY(1.22);transform-origin:0 85%;">UOM</div>
<div class="t" style="left:629px;top:420.5px;font-size:13.6px;transform:scaleY(1.22);transform-origin:0 85%;">Job</div>
<div class="t" style="left:772.3px;top:420.5px;font-size:13.6px;transform:scaleY(1.22);transform-origin:0 85%;">Job Part</div>
<div class="t" style="left:916.4px;top:420.5px;font-size:13.6px;transform:scaleY(1.22);transform-origin:0 85%;">Job Status</div>
<div class="t" style="left:1110.5px;top:420.5px;font-size:13.6px;transform:scaleY(1.22);transform-origin:0 85%;">Source</div>
<div class="t" style="left:1280px;top:420.5px;font-size:13.6px;transform:scaleY(1.22);transform-origin:0 85%;">Contract ID</div>
<div class="t" style="left:1409.2px;top:420.5px;font-size:13.6px;transform:scaleY(1.22);transform-origin:0 85%;">Exception</div>
<div class="t" style="left:1527.9px;top:420.5px;font-size:13.6px;transform:scaleY(1.22);transform-origin:0 85%;">Order By</div>
<div class="t" style="left:1631.4px;top:420.5px;font-size:13.6px;transform:scaleY(1.22);transform-origin:0 85%;">Promise Date</div>
<svg style="left:137px;top:420px" width="14" height="11" viewBox="0 0 14 11"><path d="M0.7 0.9 H13.3 L8.1 5.9 V10.3 H5.9 V5.9 Z" fill="#c4c4c4" stroke="#1c1c1c" stroke-width="1.3" stroke-linejoin="round"/><rect x="0" y="0.2" width="14" height="1.8" fill="#1c1c1c"/></svg>
<svg style="left:235px;top:420px" width="14" height="11" viewBox="0 0 14 11"><path d="M0.7 0.9 H13.3 L8.1 5.9 V10.3 H5.9 V5.9 Z" fill="#c4c4c4" stroke="#1c1c1c" stroke-width="1.3" stroke-linejoin="round"/><rect x="0" y="0.2" width="14" height="1.8" fill="#1c1c1c"/></svg>
<svg style="left:343px;top:420px" width="14" height="11" viewBox="0 0 14 11"><path d="M0.7 0.9 H13.3 L8.1 5.9 V10.3 H5.9 V5.9 Z" fill="#c4c4c4" stroke="#1c1c1c" stroke-width="1.3" stroke-linejoin="round"/><rect x="0" y="0.2" width="14" height="1.8" fill="#1c1c1c"/></svg>
<svg style="left:442px;top:420px" width="14" height="11" viewBox="0 0 14 11"><path d="M0.7 0.9 H13.3 L8.1 5.9 V10.3 H5.9 V5.9 Z" fill="#c4c4c4" stroke="#1c1c1c" stroke-width="1.3" stroke-linejoin="round"/><rect x="0" y="0.2" width="14" height="1.8" fill="#1c1c1c"/></svg>
<svg style="left:564px;top:420px" width="14" height="11" viewBox="0 0 14 11"><path d="M0.7 0.9 H13.3 L8.1 5.9 V10.3 H5.9 V5.9 Z" fill="#c4c4c4" stroke="#1c1c1c" stroke-width="1.3" stroke-linejoin="round"/><rect x="0" y="0.2" width="14" height="1.8" fill="#1c1c1c"/></svg>
<svg style="left:700px;top:420px" width="14" height="11" viewBox="0 0 14 11"><path d="M0.7 0.9 H13.3 L8.1 5.9 V10.3 H5.9 V5.9 Z" fill="#c4c4c4" stroke="#1c1c1c" stroke-width="1.3" stroke-linejoin="round"/><rect x="0" y="0.2" width="14" height="1.8" fill="#1c1c1c"/></svg>
<svg style="left:880px;top:420px" width="14" height="11" viewBox="0 0 14 11"><path d="M0.7 0.9 H13.3 L8.1 5.9 V10.3 H5.9 V5.9 Z" fill="#c4c4c4" stroke="#1c1c1c" stroke-width="1.3" stroke-linejoin="round"/><rect x="0" y="0.2" width="14" height="1.8" fill="#1c1c1c"/></svg>
<svg style="left:1003px;top:420px" width="14" height="11" viewBox="0 0 14 11"><path d="M0.7 0.9 H13.3 L8.1 5.9 V10.3 H5.9 V5.9 Z" fill="#c4c4c4" stroke="#1c1c1c" stroke-width="1.3" stroke-linejoin="round"/><rect x="0" y="0.2" width="14" height="1.8" fill="#1c1c1c"/></svg>
<svg style="left:1245px;top:420px" width="14" height="11" viewBox="0 0 14 11"><path d="M0.7 0.9 H13.3 L8.1 5.9 V10.3 H5.9 V5.9 Z" fill="#c4c4c4" stroke="#1c1c1c" stroke-width="1.3" stroke-linejoin="round"/><rect x="0" y="0.2" width="14" height="1.8" fill="#1c1c1c"/></svg>
<svg style="left:1370px;top:420px" width="14" height="11" viewBox="0 0 14 11"><path d="M0.7 0.9 H13.3 L8.1 5.9 V10.3 H5.9 V5.9 Z" fill="#c4c4c4" stroke="#1c1c1c" stroke-width="1.3" stroke-linejoin="round"/><rect x="0" y="0.2" width="14" height="1.8" fill="#1c1c1c"/></svg>
<svg style="left:1493px;top:420px" width="14" height="11" viewBox="0 0 14 11"><path d="M0.7 0.9 H13.3 L8.1 5.9 V10.3 H5.9 V5.9 Z" fill="#c4c4c4" stroke="#1c1c1c" stroke-width="1.3" stroke-linejoin="round"/><rect x="0" y="0.2" width="14" height="1.8" fill="#1c1c1c"/></svg>
<svg style="left:1604px;top:420px" width="14" height="11" viewBox="0 0 14 11"><path d="M0.7 0.9 H13.3 L8.1 5.9 V10.3 H5.9 V5.9 Z" fill="#c4c4c4" stroke="#1c1c1c" stroke-width="1.3" stroke-linejoin="round"/><rect x="0" y="0.2" width="14" height="1.8" fill="#1c1c1c"/></svg>
<svg style="left:220px;top:418px" width="12" height="15" viewBox="0 0 12 15"><path d="M0.6 0.6 H11.2 V3.6 H10 L9.6 2.5 H4 L8 7.4 L3.6 12.4 H9.8 L10.2 11.2 H11.4 V14.4 H0.6 V13.3 L5.4 7.6 L0.6 1.8 Z" fill="#111"/></svg>
<svg style="left:327.4px;top:418px" width="12" height="15" viewBox="0 0 12 15"><path d="M0.6 0.6 H11.2 V3.6 H10 L9.6 2.5 H4 L8 7.4 L3.6 12.4 H9.8 L10.2 11.2 H11.4 V14.4 H0.6 V13.3 L5.4 7.6 L0.6 1.8 Z" fill="#111"/></svg>
<svg style="left:426.2px;top:418px" width="12" height="15" viewBox="0 0 12 15"><path d="M0.6 0.6 H11.2 V3.6 H10 L9.6 2.5 H4 L8 7.4 L3.6 12.4 H9.8 L10.2 11.2 H11.4 V14.4 H0.6 V13.3 L5.4 7.6 L0.6 1.8 Z" fill="#111"/></svg>
<svg style="left:122.5px;top:419px" width="6" height="9"><path d="M1 8 L5 1" stroke="#aaa" stroke-width="1"/></svg>
<svg style="left:205px;top:419px" width="6" height="9"><path d="M1 8 L5 1" stroke="#aaa" stroke-width="1"/></svg>
<svg style="left:26px;top:445px" width="8" height="12" viewBox="0 0 8 12"><path d="M0 0 L7.5 6 L0 12 Z" fill="#111"/></svg>
<div style="left:41px;top:438px;width:1652px;height:25px;border-top:1px dotted #222;border-bottom:1px dotted #222;"></div>
<div style="left:41px;top:438px;width:1px;height:25px;border-left:1px dotted #222"></div>
<div style="left:6px;top:596px;width:1254px;height:26px;background:#00fcfc;mix-blend-mode:multiply"></div>
</body></html>
